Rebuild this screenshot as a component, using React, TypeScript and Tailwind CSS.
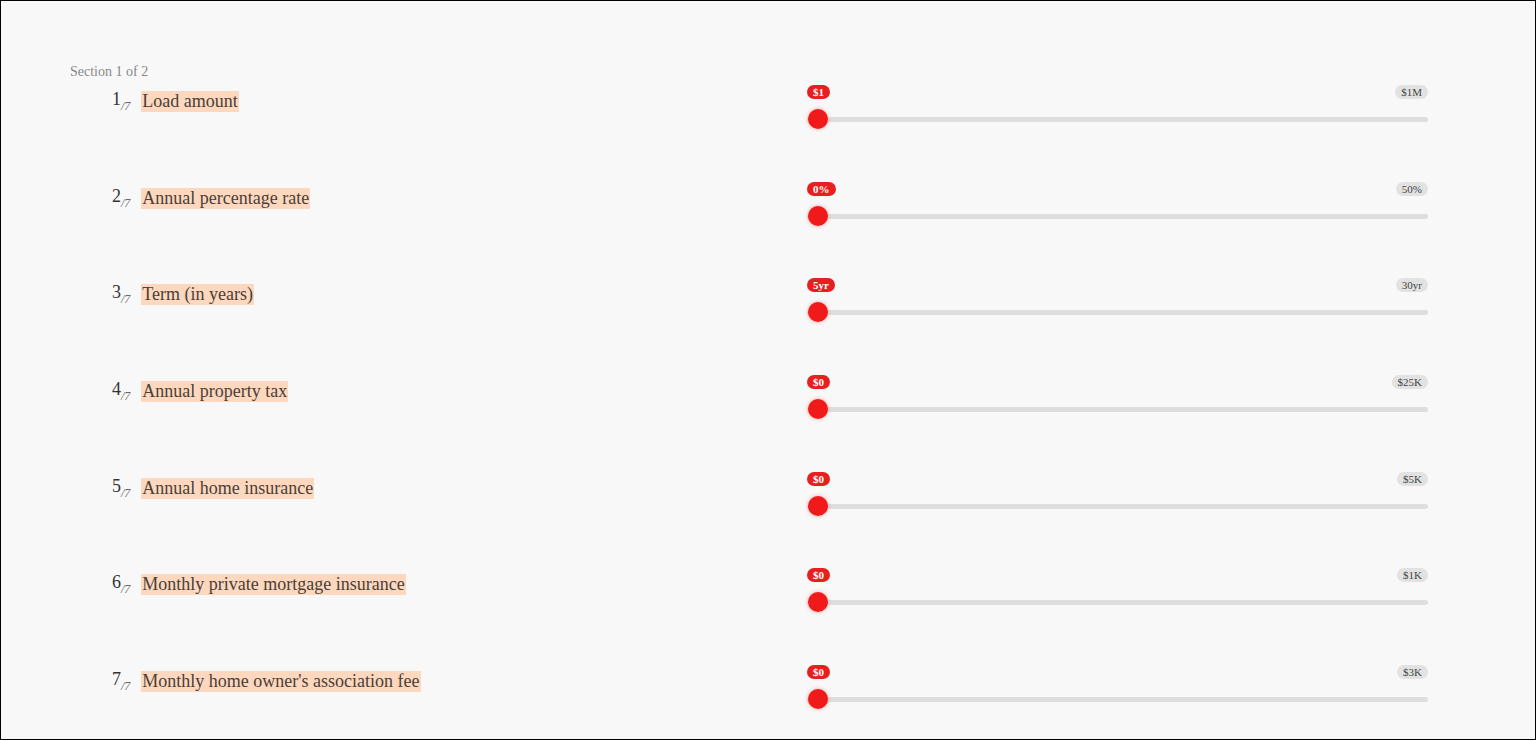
import React from 'react';

interface Field {
  label: string;
  min: string;
  max: string;
}

const fields: Field[] = [
  { label: 'Load amount', min: '$1', max: '$1M' },
  { label: 'Annual percentage rate', min: '0%', max: '50%' },
  { label: 'Term (in years)', min: '5yr', max: '30yr' },
  { label: 'Annual property tax', min: '$0', max: '$25K' },
  { label: 'Annual home insurance', min: '$0', max: '$5K' },
  { label: 'Monthly private mortgage insurance', min: '$0', max: '$1K' },
  { label: "Monthly home owner's association fee", min: '$0', max: '$3K' },
];

const serif = { fontFamily: '"Liberation Serif", "DejaVu Serif", serif' };

const Row: React.FC<{ field: Field; index: number }> = ({ field, index }) => (
  <div className="flex h-[96.7px]">
    <div className="flex-1 pl-[42px] pt-[5px]">
      <div className="flex items-start">
        <span className="text-[18px] leading-[18px] text-[#333]">{index + 1}</span>
        <span className="mt-[9px] text-[12px] leading-[14px] text-[#666] italic">/7</span>
        <span className="ml-[11px] mt-[1px] bg-[#fdd8bf] px-[1px] text-[18px] leading-[21px] text-[#4a3f36]">
          {field.label}
        </span>
      </div>
    </div>
    <div className="mr-[107px] w-[621px]">
      <div className="flex h-[14px] items-center justify-between">
        <span className="rounded-full bg-[#e81f1f] px-[6px] text-[11px] font-bold leading-[14px] text-white">
          {field.min}
        </span>
        <span className="rounded-full bg-[#e2e2e2] px-[6px] text-[11px] leading-[14px] text-[#444]">
          {field.max}
        </span>
      </div>
      <div className="relative mt-[10px] h-[20px]">
        <div className="absolute left-0 right-0 top-[8px] h-[5px] rounded-full bg-[#dedede]" />
        <div className="absolute left-[1px] top-0 h-[20px] w-[20px] rounded-full bg-[#f01a1a] shadow-[0_0_4px_rgba(240,26,26,0.35)]" />
      </div>
    </div>
  </div>
);

export default function App() {
  return (
    <div
      className="box-border h-[740px] w-full border border-black bg-[#f8f8f8] pl-[69px] pt-[62px]"
      style={serif}
    >
      <div className="h-[22px] text-[14px] leading-[17px] text-[#888]">Section 1 of 2</div>
      {fields.map((f, i) => (
        <Row key={f.label} field={f} index={i} />
      ))}
    </div>
  );
}
